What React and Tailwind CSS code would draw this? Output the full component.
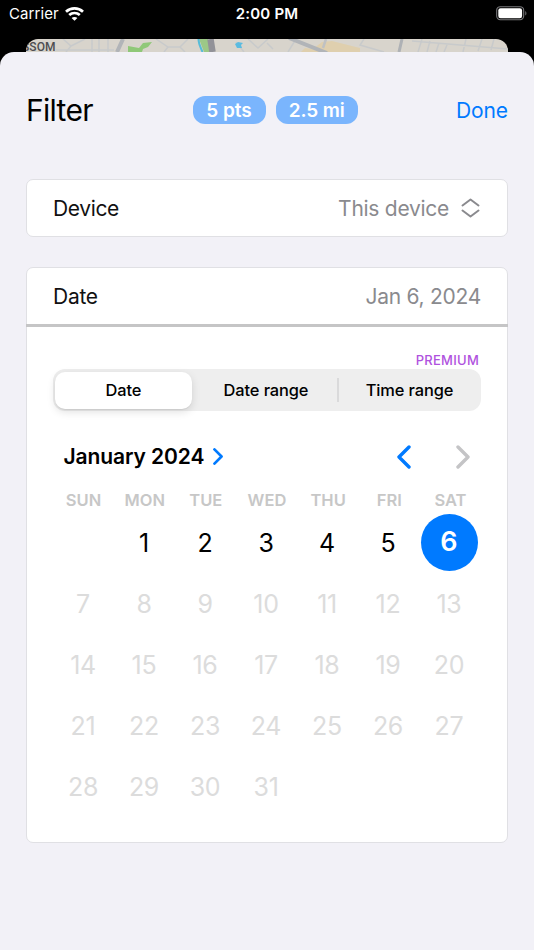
import 'react';

const WEEKDAYS = ['SUN', 'MON', 'TUE', 'WED', 'THU', 'FRI', 'SAT'];
const LEADING_BLANKS = 1;
const SELECTED = 6;
const days = [...Array(LEADING_BLANKS).fill(null), ...Array.from({ length: 31 }, (_, i) => i + 1)];

const StatusBar = () => (
  <div className="grid h-[39px] grid-cols-3 items-start px-[8px] pt-[4px] text-[15px] leading-5 text-white">
    <div className="flex items-center gap-[6px] pl-px">
      <span className="tracking-[0.1px]">Carrier</span>
      <svg className="-mt-px h-[14px] w-[19px]" viewBox="0 0 19 14" fill="none" stroke="currentColor" strokeWidth="2.7">
        <path d="M1 4.8C5.8.3 13.2.3 18 4.8" />
        <path d="M4.2 8.1c3-2.8 7.6-2.8 10.6 0" />
        <path d="M9.5 13.8 6.6 11c1.6-1.5 4.2-1.5 5.8 0z" fill="currentColor" stroke="none" />
      </svg>
    </div>
    <div className="text-center font-semibold tracking-[0.2px]">2:00 PM</div>
    <svg className="-mr-px mt-[2px] h-[15px] w-[31px] justify-self-end" viewBox="0 0 31 15" fill="none">
      <rect x=".7" y=".7" width="27" height="13" rx="3.6" stroke="#77777a" strokeWidth="1.1" />
      <rect x="2.3" y="2.2" width="23.8" height="10" rx="2.2" fill="#fff" />
      <path d="M29.3 5v4.6c1.5-.7 1.5-3.9 0-4.6z" fill="#77777a" />
    </svg>
  </div>
);

const MapStrip = () => (
  <div className="relative mx-[26px] h-[13px] overflow-hidden rounded-t-[12px] bg-[#d8d4cc]">
    <svg className="h-[13px] w-[482px]" viewBox="0 0 482 13" fill="none">
      <g stroke="#c8cacb" strokeWidth="1.5">
        <path d="M30 11h58M37 0l8 7 14-7M45 7l-5 6M66 0v13M73 0v13M82 0v13M130 0l12 8h12l8-8M142 8l-4 5M154 8l5 5M210 3l8 10M222 0l10 9 10-9M241 4l6 6M270 0l-8 13M300 0l-5 10M338 0l-4 6 24 7M386 2l96 8M396 0l-4 13M404 2l-3 11M413 4l-3 9M421 6l-3 7M440 0l-3 13M456 0l-4 12M468 0l-3 11" />
      </g>
      <path d="M102 7l11 2 4-5 9-1-4 5-5 2-1 3h-14z" fill="#8fc878" />
      <path d="M173 0h9l2 13h-6z" fill="#9cc887" />
      <path d="M172.5 0c0 5 2 8 4 13" stroke="#58bcd8" strokeWidth="2" />
      <path d="M184.5 0l2 13" stroke="#929298" strokeWidth="6.5" />
      <path d="M209 5l3-2 5 1-2 2 1 3h-5z" fill="#5bbbe0" />
      <path d="M296 3l10-1 28 7v4h-59l4-4 8 1z" fill="#dfcfae" />
      <path d="M263-1l38 15M97 0l-6 13" stroke="#b1b4b8" strokeWidth="4" />
      <path d="M300 0l-3 9" stroke="#bfc1c3" strokeWidth="2.5" />
      <path d="M376 0l-3 13" stroke="#aeb1b5" strokeWidth="3" />
    </svg>
    <span className="absolute -left-[4px] top-[1px] font-['Roboto',sans-serif] text-[12px] font-medium leading-[14px] tracking-[0.1px] text-[#4d4d50]">SSOM</span>
  </div>
);

const Chevron = ({ className, d = 'M2 2l10 10L2 22', width = 3.4 }) => (
  <svg className={className} viewBox="0 0 14 24" fill="none" stroke="currentColor" strokeWidth={width} strokeLinecap="round" strokeLinejoin="round"><path d={d} /></svg>
);

const Pill = ({ children, className }) => (
  <span className={`flex h-[28px] items-center justify-center rounded-[12px] bg-[#7ab5fd] pt-[2px] text-[19px] font-semibold text-white ${className}`}>{children}</span>
);

const Header = () => (
  <div className="flex h-[40px] items-center text-black">
    <h1 className="w-[166.5px] text-[30px] leading-10 tracking-[-0.7px]">Filter</h1>
    <div className="flex gap-[10px]">
      <Pill className="w-[73px]">5 pts</Pill>
      <Pill className="w-[82.5px] tracking-[-0.1px]">2.5 mi</Pill>
    </div>
    <button className="ml-auto pt-[2px] text-[21px] tracking-[-0.1px] text-[#007aff]">Done</button>
  </div>
);

const DayCell = ({ day }) => {
  if (!day) return <div />;
  if (day === SELECTED) {
    return <div className="flex h-[61px] items-center justify-center"><span className="flex size-[57px] items-center justify-center rounded-full bg-[#007aff] pt-px text-[27px] font-semibold text-white">{day}</span></div>;
  }
  return <div className={`flex h-[61px] items-center justify-center pt-[3px] text-[25px] tracking-[-0.3px] ${day < SELECTED ? 'text-black' : 'text-[#dcdcdc]'}`}>{day}</div>;
};

const Calendar = () => (
  <div>
    <div className="flex h-[30px] items-center pl-[36.5px] pr-[37px]">
      <span className="pt-[2px] text-[21px] font-semibold tracking-[-0.1px] text-black">January 2024</span>
      <Chevron className="ml-[9px] mt-px h-[17px] w-[10px] text-[#007aff]" width={3.8} />
      <Chevron className="ml-auto mt-px h-[24px] w-[14px] text-[#007aff]" d="M12 2L2 12l10 10" />
      <Chevron className="ml-[45px] mt-px h-[24px] w-[14px] text-[#c4c4c6]" />
    </div>
    <div className="mx-[26px] mt-[18px] grid grid-cols-7 text-center text-[16.5px] font-semibold leading-[22px] text-[#c7c7c7]">
      {WEEKDAYS.map(d => <div key={d}>{d}</div>)}
    </div>
    <div className="ml-[25.5px] mt-[0.5px] grid w-[427px] grid-cols-7">
      {days.map((d, i) => <DayCell key={i} day={d} />)}
    </div>
  </div>
);

const App = () => (
  <div className="h-[950px] w-[534px] overflow-hidden bg-black font-['Inter',sans-serif]">
    <StatusBar />
    <MapStrip />
    <div className="h-[898px] rounded-t-[14px] bg-[#f2f1f7] px-[26px] pt-[38px]">
      <Header />

      <div className="mt-[49px] flex h-[58px] items-center rounded-[7px] border border-[#e0e0e4] bg-white px-[26px] text-[21px] tracking-[-0.27px]">
        <span className="pt-[2px] tracking-[-0.35px] text-[#111]">Device</span>
        <span className="ml-auto pt-[2px] text-[#8a8a8e]">This device</span>
        <svg className="ml-[12px] mr-px h-[20px] w-[19px]" viewBox="0 0 19 20" fill="none" stroke="#8a8a8e" strokeWidth="2" strokeLinecap="round" strokeLinejoin="round">
          <path d="M1.5 7.5l8-6 8 6M1.5 12.5l8 6 8-6" />
        </svg>
      </div>

      <div className="mt-[30px] h-[576px] rounded-[7px] border border-[#e0e0e4] bg-white">
        <div className="-mx-px flex h-[59px] items-center justify-between border-b-[3px] border-[#c5c5c6] px-[27px] pt-[1px] text-[21px] tracking-[-0.27px]">
          <span className="text-[#111]">Date</span>
          <span className="text-[#8a8a8e]">Jan 6, 2024</span>
        </div>
        <div className="mr-[28px] mt-[25px] text-right text-[13px] font-medium leading-[17px] tracking-[0.25px] text-[#af52de]">PREMIUM</div>
        <div className="mx-[26px] flex h-[42px] items-center rounded-[12px] bg-[#eeeeee] p-[2px] text-center text-[16.4px] font-medium leading-6 tracking-[-0.1px] text-black">
          <div className="flex h-[37px] w-[137px] items-center justify-center rounded-[10px] bg-white shadow-[0_3px_8px_rgba(0,0,0,0.12),0_1px_1px_rgba(0,0,0,0.06)]">Date</div>
          <div className="ml-[3px] w-[142px]">Date range</div>
          <div className="h-6 flex-1 border-l-2 border-[#dadadb] pl-px">Time range</div>
        </div>
        <div className="mt-[30px]"><Calendar /></div>
      </div>
    </div>
  </div>
);

export default App;
